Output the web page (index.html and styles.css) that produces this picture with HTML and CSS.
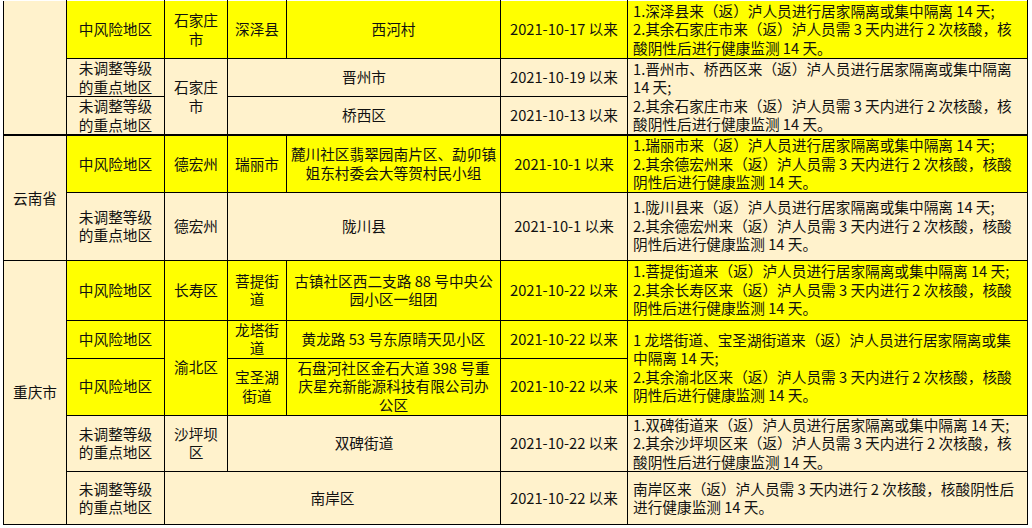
FILE: index.html
```html
<!DOCTYPE html>
<html lang="zh-CN">
<head>
<meta charset="utf-8">
<title>风险地区管控措施</title>
<link rel="stylesheet" href="styles.css">
</head>
<body>
<table class="risk-table">
  <colgroup>
    <col class="c-prov">
    <col class="c-level">
    <col class="c-city">
    <col class="c-county">
    <col class="c-place">
    <col class="c-date">
    <col class="c-policy">
  </colgroup>
  <tbody>
    <tr class="r1 hi">
      <td class="prov first" rowspan="3"></td>
      <td class="topline">中风险地区</td>
      <td class="topline">石家庄<br>市</td>
      <td class="topline">深泽县</td>
      <td class="topline">西河村</td>
      <td class="topline">2021-10-17 以来</td>
      <td class="topline policy">1.深泽县来（返）泸人员进行居家隔离或集中隔离 14 天;<br>2.其余石家庄市来（返）泸人员需 3 天内进行 2 次核酸，核<br>酸阴性后进行健康监测 14 天。</td>
    </tr>
    <tr class="r2 lo">
      <td>未调整等级<br>的重点地区</td>
      <td rowspan="2">石家庄<br>市</td>
      <td colspan="2">晋州市</td>
      <td>2021-10-19 以来</td>
      <td class="policy" rowspan="2">1.晋州市、桥西区来（返）泸人员进行居家隔离或集中隔离<br>14 天;<br>2.其余石家庄市来（返）泸人员需 3 天内进行 2 次核酸，核<br>酸阴性后进行健康监测 14 天。</td>
    </tr>
    <tr class="r3 lo">
      <td>未调整等级<br>的重点地区</td>
      <td colspan="2">桥西区</td>
      <td>2021-10-13 以来</td>
    </tr>
    <tr class="r4 hi sep">
      <td class="prov" rowspan="2">云南省</td>
      <td>中风险地区</td>
      <td>德宏州</td>
      <td>瑞丽市</td>
      <td>麓川社区翡翠园南片区、勐卯镇<br>姐东村委会大等贺村民小组</td>
      <td>2021-10-1 以来</td>
      <td class="policy">1.瑞丽市来（返）泸人员进行居家隔离或集中隔离 14 天;<br>2.其余德宏州来（返）泸人员需 3 天内进行 2 次核酸，核酸<br>阴性后进行健康监测 14 天。</td>
    </tr>
    <tr class="r5 lo">
      <td>未调整等级<br>的重点地区</td>
      <td>德宏州</td>
      <td colspan="2">陇川县</td>
      <td>2021-10-1 以来</td>
      <td class="policy">1.陇川县来（返）泸人员进行居家隔离或集中隔离 14 天;<br>2.其余德宏州来（返）泸人员需 3 天内进行 2 次核酸，核酸<br>阴性后进行健康监测 14 天。</td>
    </tr>
    <tr class="r6 hi">
      <td class="prov" rowspan="5">重庆市</td>
      <td>中风险地区</td>
      <td>长寿区</td>
      <td>菩提街<br>道</td>
      <td>古镇社区西二支路 88 号中央公<br>园小区一组团</td>
      <td>2021-10-22 以来</td>
      <td class="policy">1.菩提街道来（返）泸人员进行居家隔离或集中隔离 14 天;<br>2.其余长寿区来（返）泸人员需 3 天内进行 2 次核酸，核酸<br>阴性后进行健康监测 14 天。</td>
    </tr>
    <tr class="r7 hi">
      <td>中风险地区</td>
      <td rowspan="2">渝北区</td>
      <td>龙塔街<br>道</td>
      <td>黄龙路 53 号东原晴天见小区</td>
      <td>2021-10-22 以来</td>
      <td class="policy" rowspan="2">1 龙塔街道、宝圣湖街道来（返）泸人员进行居家隔离或集<br>中隔离 14 天;<br>2.其余渝北区来（返）泸人员需 3 天内进行 2 次核酸，核酸<br>阴性后进行健康监测 14 天。</td>
    </tr>
    <tr class="r8 hi">
      <td>中风险地区</td>
      <td>宝圣湖<br>街道</td>
      <td>石盘河社区金石大道 398 号重<br>庆星充新能源科技有限公司办<br>公区</td>
      <td>2021-10-22 以来</td>
    </tr>
    <tr class="r9 lo">
      <td>未调整等级<br>的重点地区</td>
      <td>沙坪坝<br>区</td>
      <td colspan="2">双碑街道</td>
      <td>2021-10-22 以来</td>
      <td class="policy">1.双碑街道来（返）泸人员进行居家隔离或集中隔离 14 天;<br>2.其余沙坪坝区来（返）泸人员需 3 天内进行 2 次核酸，核<br>酸阴性后进行健康监测 14 天。</td>
    </tr>
    <tr class="r10 lo">
      <td>未调整等级<br>的重点地区</td>
      <td colspan="3">南岸区</td>
      <td>2021-10-22 以来</td>
      <td class="policy">南岸区来（返）泸人员需 3 天内进行 2 次核酸，核酸阴性后<br>进行健康监测 14 天。</td>
    </tr>
  </tbody>
</table>
</body>
</html>
```
FILE: styles.css
```css
html, body {
  margin: 0;
  padding: 0;
  background: #ffffff;
}

body {
  font-family: "Noto Sans CJK SC", "Noto Sans", sans-serif;
  font-size: 11pt;
  line-height: 18.5px;
  color: #111111;
}

.risk-table {
  margin-left: 3px;
  border-collapse: collapse;
  table-layout: fixed;
  width: 1025px;
}

.c-prov { width: 63px; }
.c-level { width: 98px; }
.c-city { width: 63px; }
.c-county { width: 59px; }
.c-place { width: 214px; }
.c-date { width: 127px; }
.c-policy { width: 400px; }

.risk-table td {
  border: 1px solid #000000;
  padding: 0 2px;
  text-align: center;
  vertical-align: middle;
  white-space: nowrap;
  overflow: hidden;
}

.hi td { background: #ffff00; }
.lo td { background: #fff2cc; }
.risk-table td.prov { background: #fff2cc; }

.risk-table td.first { border-top: none; }
.risk-table td.topline { border-top: 1px solid #ffffff; }

.sep td { border-top: 2px solid #000000; }

.risk-table td.policy {
  text-align: left;
  padding: 0 4px 0 5px;
}

.r1 { height: 58px; }
.r2 { height: 38px; }
.r3 { height: 38px; }
.r4 { height: 56px; }
.r5 { height: 68px; }
.r6 { height: 60px; }
.r7 { height: 38px; }
.r8 { height: 57px; }
.r9 { height: 56px; }
.r10 { height: 53px; }
```
